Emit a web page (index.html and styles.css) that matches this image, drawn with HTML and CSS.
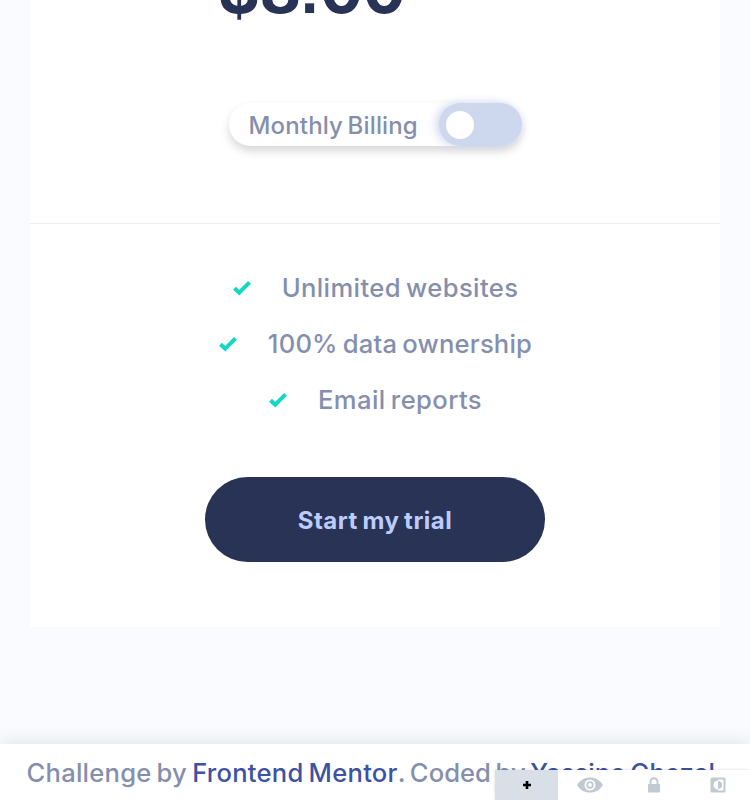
FILE: index.html
```html
<!DOCTYPE html>
<html lang="en">
<head>
<meta charset="utf-8">
<title>Pricing</title>
<link rel="stylesheet" href="styles.css">
</head>
<body>
<main class="card">
  <div class="price">$8<span class="point">.</span>00</div>
  <div class="billing"><span class="billing-label">Monthly Billing</span><span class="toggle"><span class="knob"></span></span></div>
  <ul class="features">
    <li><svg class="check" viewBox="0 0 18 16"><path d="M1.500 8.200 6.200 12.700 16.500 2.300" /></svg><span class="f1">Unlimited websites</span></li>
    <li><svg class="check" viewBox="0 0 18 16"><path d="M1.500 8.200 6.200 12.700 16.500 2.300" /></svg><span class="f2">100% data ownership</span></li>
    <li><svg class="check" viewBox="0 0 18 16"><path d="M1.500 8.200 6.200 12.700 16.500 2.300" /></svg><span class="f3">Email reports</span></li>
  </ul>
  <button class="trial">Start my trial</button>
</main>
<footer class="credits"><span class="c1">Challenge by </span><a class="c2">Frontend Mentor</a><span class="c3">. Coded by </span><a class="c4">Yassine Ghezal</a></footer>
<div class="toolbar">
  <div class="tool active"><svg width="8" height="8" viewBox="0 0 8 8"><path d="M2.700 0h2.600v2.700H8v2.600H5.300V8H2.700V5.300H0V2.700h2.700z" fill="#000"/></svg></div>
  <div class="tool"><svg width="26" height="16" viewBox="0 0 26 16"><path fill-rule="evenodd" d="M0 8C3 3 7.500.5 13 .5S23 3 26 8c-3 5-7.500 7.500-13 7.500S3 13 0 8zM13 2.500a5.500 5.500 0 1 0 0 11 5.500 5.500 0 1 0 0-11z"/><circle cx="13" cy="8" r="2.800" fill="none" stroke="#c1c9d2" stroke-width="1.800"/></svg></div>
  <div class="tool"><svg width="12" height="16" viewBox="0 0 12 16"><path fill-rule="evenodd" d="M1.500 7V4.800a4.500 4.500 0 0 1 9 0V7h.5a1 1 0 0 1 1 1v6.500a1 1 0 0 1-1 1H1a1 1 0 0 1-1-1V8a1 1 0 0 1 1-1zM3.500 7h5V4.800a2.500 2.500 0 0 0-5 0z"/></svg></div>
  <div class="tool"><svg width="16" height="16" viewBox="0 0 16 16"><path fill-rule="evenodd" d="M2 .5h12A1.500 1.500 0 0 1 15.500 2v12a1.500 1.500 0 0 1-1.500 1.500H2A1.500 1.500 0 0 1 .5 14V2A1.500 1.500 0 0 1 2 .5zM8 2.500H13.500v11H8V12.500A4.500 4.500 0 0 1 8 3.500z"/><path d="M8 4a4 4 0 0 1 0 8z"/></svg></div>
</div>
</body>
</html>
```
FILE: styles.css
```css
* { box-sizing: border-box; }
body {
  margin: 0;
  height: 800px;
  overflow: hidden;
  position: relative;
  display: flex;
  flex-direction: column;
  background: #fafbff;
  color: #858fad;
  font: 500 25.6px/36px Inter, sans-serif;
}
.card {
  width: 690px;
  height: 627px;
  margin: 0 30px 117px;
  flex: none;
  background: #fff;
  display: flex;
  flex-direction: column;
  align-items: center;
}
.price {
  width: 314px;
  height: 80px;
  margin-top: -50px;
  flex: none;
  font-size: 64px;
  line-height: 80px;
  font-weight: 700;
  letter-spacing: -.4px;
  color: #293356;
}
.point { font-family: "Liberation Sans", sans-serif; letter-spacing: 1.5px; line-height: 1; }
.billing {
  display: flex;
  width: 293px;
  height: 43px;
  margin-top: 73px;
  flex: none;
  border-radius: 22px;
  box-shadow: 0 5px 10px rgba(0, 0, 0, .16);
}
.billing-label {
  width: 210px;
  padding-left: 20px;
  font-size: 24px;
  line-height: 46px;
  letter-spacing: .15px;
  word-spacing: -2px;
  white-space: nowrap;
}
.toggle {
  width: 83px;
  height: 43px;
  padding: 8px 7px;
  border-radius: 22px;
  background: #cdd7ee;
  box-shadow: -3px 0 10px #cdd7ee;
}
.knob {
  display: block;
  width: 28px;
  height: 28px;
  border-radius: 50%;
  background: #fff;
}
.features {
  width: 690px;
  margin: 77px 0 0;
  padding: 46px 0 0 1px;
  border-top: 1px solid #eaeefb;
  list-style: none;
}
.features li {
  display: flex;
  justify-content: center;
  align-items: center;
  height: 36px;
  margin-bottom: 20px;
  word-spacing: -2px;
  white-space: nowrap;
}
.f1 { letter-spacing: .39px; }
.f2 { letter-spacing: .2px; }
.f3 { letter-spacing: .4px; }
.check {
  width: 18px;
  height: 16px;
  margin-right: 31px;
  fill: none;
  stroke: #10d8c4;
  stroke-width: 4;
}
.trial {
  width: 340px;
  height: 85px;
  margin-top: 39px;
  padding: 3px 0 1px;
  flex: none;
  border: 0;
  border-radius: 43px;
  background: #293356;
  color: #bdccff;
  font: 700 24px/36px Inter, sans-serif;
  letter-spacing: .5px;
  word-spacing: -1.5px;
}
.credits {
  height: 56px;
  flex: none;
  padding: 11px 0 0 26.5px;
  background: #fff;
  box-shadow: 0 0 20px rgba(0, 0, 0, .12);
  word-spacing: -2px;
  white-space: nowrap;
}
.c1 { letter-spacing: .23px; }
.c2 { letter-spacing: .25px; }
.c3 { letter-spacing: .05px; word-spacing: -2.3px; }
.c4 { letter-spacing: .05px; }
.credits a { color: #3e52a3; }
.toolbar {
  position: absolute;
  left: 495px;
  top: 770px;
  width: 255px;
  height: 30px;
  display: flex;
  background: #fff;
  box-shadow: 0 0 3px rgba(0, 0, 0, .15);
}
.tool {
  width: 64px;
  flex: none;
  display: flex;
  align-items: center;
  justify-content: center;
  fill: #c1c9d2;
}
.tool.active { width: 63px; background: #d9dfe7; }
```
